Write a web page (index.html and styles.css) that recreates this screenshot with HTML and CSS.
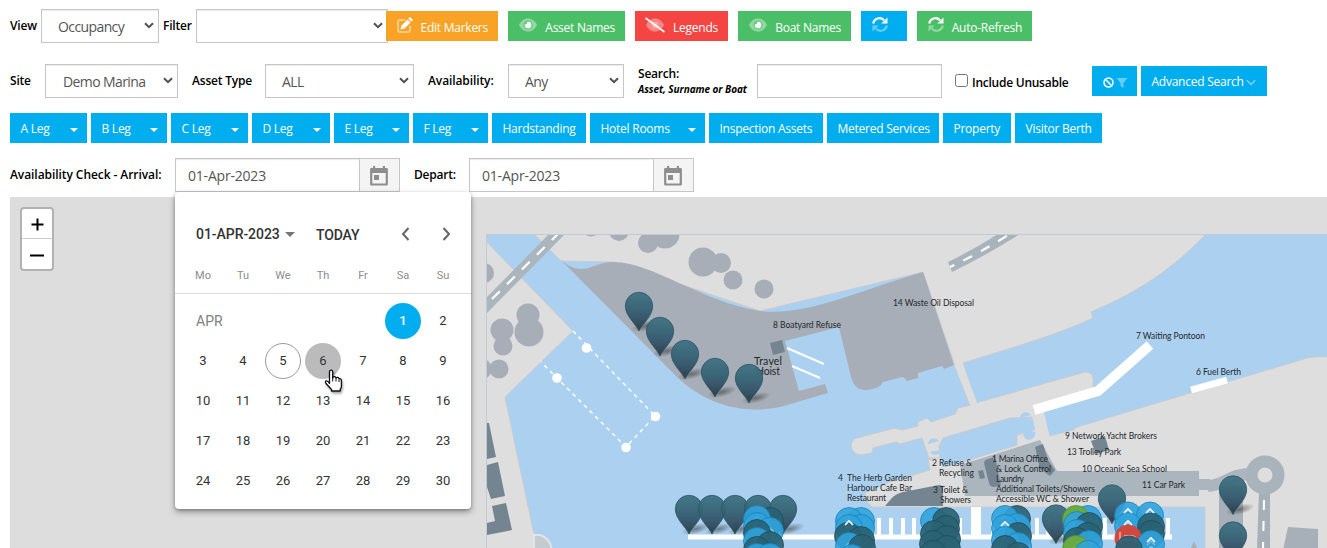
FILE: index.html
```html
<!DOCTYPE html>
<html lang="en">
<head>
<meta charset="utf-8">
<title>Marina Map</title>
<link rel="stylesheet" href="styles.css">
</head>
<body>
<svg class="defs" width="0" height="0">
  <defs>
    <symbol id="chev" viewBox="0 0 10 7"><path d="M1 1.200l4 4 4-4" fill="none" stroke="#505050" stroke-width="2"/></symbol>
    <symbol id="caret" viewBox="0 0 8 4"><path d="M0 0h8L4 4z" fill="#fff"/></symbol>
    <symbol id="eye" viewBox="0 0 18 14"><path d="M0 7C2 3 5 .5 9 .5S16 3 18 7c-2 4-5 6.500-9 6.500S2 11 0 7z" fill="#fff" opacity=".4"/><circle cx="9" cy="7" r="4.600" fill="#4bbf67" opacity=".6"/><path d="M9 3.700a3.300 3.300 0 1 1-3.200 2.600 1.900 1.900 0 0 0 2.400-2.400z" fill="#fff"/></symbol>
    <symbol id="refresh" viewBox="0 0 16 15"><path d="M1.200 6.500A6.300 6.300 0 0 1 12 3.200" fill="none" stroke="#fff" stroke-width="2.200"/><path d="M15.500.5v6H9.300z" fill="#fff"/><g opacity=".4"><path d="M14.800 8.500A6.300 6.300 0 0 1 4 11.800" fill="none" stroke="#fff" stroke-width="2.200"/><path d="M.5 14.500v-6h6.200z" fill="#fff"/></g></symbol>
    <symbol id="cal" viewBox="0 0 18 20"><path d="M1.200 3.200h15.600v15.300H1.200z" fill="none" stroke="#8e8e8e" stroke-width="2.200" stroke-linejoin="round"/><path d="M1 3h16v4H1zM3 0h2.200v4H3zM12.800 0H15v4h-2.200zM4 9h5v5H4z" fill="#8e8e8e"/></symbol>
    <linearGradient id="tealFill" x1="0" y1="0" x2="0" y2="1"><stop offset="0" stop-color="#3f7284"/><stop offset=".4" stop-color="#356374"/><stop offset=".65" stop-color="#34536a"/><stop offset="1" stop-color="#273b3d"/></linearGradient>
    <radialGradient id="shade"><stop offset="0" stop-color="#333" stop-opacity=".55"/><stop offset="1" stop-color="#333" stop-opacity="0"/></radialGradient>
    <g id="pin"><ellipse cx="7" cy="-5" rx="15" ry="5" transform="rotate(-14 7 -5)" fill="url(#shade)"/><path d="M0 0C-3-7-13.700-15-13.700-25a13.700 13.700 0 0 1 27.400 0C13.700-15 3-7 0 0z" fill="url(#tealFill)" fill-opacity=".95" stroke="#29576a" stroke-width=".8"/></g>
    <g id="dark"><circle r="13.500" fill="#2a6273" fill-opacity=".92" stroke="#194d60" stroke-width=".8"/></g>
    <g id="blue"><circle r="13.500" fill="#31a3dc" fill-opacity=".9" stroke="#1982b9" stroke-width=".8"/><path d="M-4 1l4-4 4 4M-2 3h4" fill="none" stroke="#d9f0fb" stroke-width="1.500" opacity=".45"/></g>
    <g id="green"><circle r="13.500" fill="#69aa43" stroke="#549037" stroke-width=".8"/><path d="M-7 2q7-6 14 0" fill="none" stroke="#92c474" stroke-width="1.500"/></g>
  </defs>
</svg>

<div class="row row-view">
  <label class="lbl w-view">View</label>
  <div class="select s-view"><span>Occupancy</span><svg><use href="#chev"/></svg></div>
  <label class="lbl w-filter">Filter</label>
  <div class="select s-filter"><span></span><svg><use href="#chev"/></svg></div>
  <div class="actions">
    <button class="act orange a1"><svg width="16" height="16" viewBox="0 0 16 16"><path d="M8 3H3Q1 3 1 5v8q0 2 2 2h8q2 0 2-2V9" fill="none" stroke="#fff" stroke-width="2" opacity=".45"/><path d="M4.500 8.500l6-6 3 3-6 6-4 1zM11.300 1.700L13 0l3 3-1.700 1.700z" fill="#fff"/></svg><span>Edit Markers</span></button>
    <button class="act green a2"><svg width="18" height="14"><use href="#eye"/></svg><span>Asset Names</span></button>
    <button class="act red a3"><svg width="20" height="16" viewBox="0 0 20 16"><path d="M1 8c2-4 5-6.500 9-6.500S17 4 19 8c-2 4-5 6.500-9 6.500S3 12 1 8z" fill="#fff" opacity=".35"/><circle cx="10" cy="8" r="3.500" fill="#fff" opacity=".25"/><path d="M.5 1l19 14" stroke="#fff" stroke-width="1.800"/></svg><span>Legends</span></button>
    <button class="act green a4"><svg width="18" height="14"><use href="#eye"/></svg><span>Boat Names</span></button>
    <button class="act cyan a5"><svg width="16" height="15"><use href="#refresh"/></svg></button>
    <button class="act green a6"><svg width="16" height="15"><use href="#refresh"/></svg><span>Auto-Refresh</span></button>
  </div>
</div>

<div class="row row-site">
  <label class="lbl w-site">Site</label>
  <div class="select s-site"><span>Demo Marina</span><svg><use href="#chev"/></svg></div>
  <label class="lbl w-type">Asset Type</label>
  <div class="select s-type"><span>ALL</span><svg><use href="#chev"/></svg></div>
  <label class="lbl w-avail">Availability:</label>
  <div class="select s-avail"><span>Any</span><svg><use href="#chev"/></svg></div>
  <label class="lbl w-search">Search:<em>Asset, Surname or Boat</em></label>
  <div class="field f-search"></div>
  <input type="checkbox" class="check">
  <label class="lbl w-unus">Include Unusable</label>
  <button class="tag icons"><svg width="11" height="11" viewBox="0 0 11 11"><circle cx="5.500" cy="5.500" r="4.500" fill="none" stroke="#fff" stroke-width="1.500"/><path d="M2.300 2.300l6.400 6.400" stroke="#fff" stroke-width="1.500"/></svg><svg width="12" height="10" viewBox="0 0 12 10"><path d="M.5 0h11L7.500 5v5L4.500 8V5z" fill="#fff" opacity=".4"/></svg></button>
  <button class="tag adv"><span>Advanced Search</span><svg width="10" height="7" viewBox="0 0 10 7"><path d="M.8 1.200L5 5.400l4.200-4.200" fill="none" stroke="#fff" stroke-width="1.400" opacity=".5"/></svg></button>
</div>

<div class="row row-legs">
  <button class="tag g1"><span>A Leg</span><svg><use href="#caret"/></svg></button>
  <button class="tag g2"><span>B Leg</span><svg><use href="#caret"/></svg></button>
  <button class="tag g3"><span>C Leg</span><svg><use href="#caret"/></svg></button>
  <button class="tag g4"><span>D Leg</span><svg><use href="#caret"/></svg></button>
  <button class="tag g5"><span>E Leg</span><svg><use href="#caret"/></svg></button>
  <button class="tag g6"><span>F Leg</span><svg><use href="#caret"/></svg></button>
  <button class="tag g7"><span>Hardstanding</span></button>
  <button class="tag g8"><span>Hotel Rooms</span><svg><use href="#caret"/></svg></button>
  <button class="tag g9"><span>Inspection Assets</span></button>
  <button class="tag g10"><span>Metered Services</span></button>
  <button class="tag g11"><span>Property</span></button>
  <button class="tag g12"><span>Visitor Berth</span></button>
</div>

<div class="row row-dates">
  <label class="lbl w-arr">Availability Check - Arrival:</label>
  <div class="date-wrap">
    <div class="field f-date">01-Apr-2023</div><div class="addon"><svg width="18" height="20"><use href="#cal"/></svg></div>
    <div class="picker">
      <div class="p-head"><b class="p-date">01-APR-2023</b><svg width="10" height="5" viewBox="0 0 10 5"><path d="M0 0h10L5 5z" fill="#757575"/></svg><b class="p-today">TODAY</b><svg class="p-prev" width="9" height="14" viewBox="0 0 9 14"><path d="M7.500 1L2 7l5.500 6" fill="none" stroke="#666" stroke-width="2"/></svg><svg class="p-next" width="9" height="14" viewBox="0 0 9 14"><path d="M1.500 1L7 7l-5.500 6" fill="none" stroke="#666" stroke-width="2"/></svg></div>
      <div class="p-week"><i>Mo</i><i>Tu</i><i>We</i><i>Th</i><i>Fr</i><i>Sa</i><i>Su</i></div>
      <div class="p-days">
        <span class="p-month">APR</span><span class="sel">1</span><span>2</span>
        <span>3</span><span>4</span><span class="now">5</span><span class="hov">6</span><span>7</span><span>8</span><span>9</span>
        <span>10</span><span>11</span><span>12</span><span>13</span><span>14</span><span>15</span><span>16</span>
        <span>17</span><span>18</span><span>19</span><span>20</span><span>21</span><span>22</span><span>23</span>
        <span>24</span><span>25</span><span>26</span><span>27</span><span>28</span><span>29</span><span>30</span>
      </div>
      <svg class="hand" width="20" height="25" viewBox="0 0 20 25"><path d="M5.500 14.500V3q0-1.800 1.600-1.800T8.700 3v6q.3-1.400 1.700-1.300T12 9.200q.4-1 1.600-.9t1.500 1.500q2.300-.6 2.300 2V17q0 2-1.200 3.500V22H7.500v-1.500L2 14.500q-1.200-2 .2-2.600t3.300 2.600z" fill="#fff" stroke="#101018" stroke-width="1.300" stroke-linejoin="round"/><path d="M8.700 8v4.500M12 9.500v3M15 10.500v2.500" stroke="#101018"/></svg>
    </div>
  </div>
  <label class="lbl w-dep">Depart:</label>
  <div class="field f-date">01-Apr-2023</div><div class="addon"><svg width="18" height="20"><use href="#cal"/></svg></div>
</div>

<main class="map">
<svg class="chart" viewBox="10 197 1317 351">
  <clipPath id="sheet"><path d="M486 234h841v314H486z"/></clipPath>
  <g clip-path="url(#sheet)">
    <path d="M486 234h841v314H486z" fill="#abd0f0"/>
    <g fill="#dedede" stroke="#c9cccf" stroke-width="1">
      <path d="M480 235L573 331 505 397 533 530Q536 536 535 550H480z"/>
      <path d="M533 233L561 261 614 262 760 311 923 272 955 366 970 406 976 403 963 363C1010 348 1055 336 1093 318L1091 312C1138 292 1173 269 1207 233z"/>
      <path d="M851 445Q852 439 857 438L895 428 902 430 918 426V422L927 418 931 422 955 414 958 408 970 405 976 403 1085 372Q1092 372 1093 378V388L1033 411V417L1010 418 943 438 939 446 940 458 929 458 922 438 900 444 896 442 873 448 872 453 860 455Q852 454 851 445z"/>
      <path d="M865 493L890 482 930 470 928 460 940 457 943 467 960 463 1017 445V435L1040 428 1045 437 1073 430 1077 427 1304 359Q1312 356 1330 357V550H1205V507H872Q866 502 865 493z"/>
    </g>
    <path d="M954 364L971 406 977 403 962 362zM1031 412l12-4 7 30-12 3z" fill="#dedede"/>
    <g fill="#abd0f0"><path d="M928 444a6 6 0 0 1 11-3zM930 452a6 6 0 0 0 11-2zM1020 418a6 6 0 0 1 11-3zM1022 424h8l-3 7zM1023 435a6 6 0 0 0 12-3l-7-2z"/></g>
    <path d="M561 260C568 266 574 269 581 269C592 269 598 262 614 262C652 262 702 302 760 311C805 317 860 290 923 272L954 365 944 369 942 366 918 373 918 378 907 381 903 377 883 382 880 386C868 392 855 393 851 377L839 327 785 341 799 391 825 384 828 393 780 407C740 415 705 403 678 378z" fill="#a7aeb7"/>
    <path d="M534 550V535h6q10 3 12 15z" fill="#c4cbd0" stroke="#e2e4e5" stroke-width="2"/>
    <path d="M487 297L549 234H565L487 313z" fill="#abb5bd"/>
    <path d="M492 299L559 233" stroke="#fff" stroke-width="2.200" stroke-dasharray="11 10"/>
    <path d="M948 262Q975 249 998 234H1020Q985 256 952 272z" fill="#a9b3bb"/>
    <path d="M950 267Q978 254 1010 234" fill="none" stroke="#fff" stroke-width="2.200" stroke-dasharray="10 10" stroke-dashoffset="5"/>
    <g fill="#a7aeb7">
      <circle cx="484" cy="273" r="10"/><circle cx="591" cy="227" r="9.500"/><circle cx="619" cy="231" r="10"/><circle cx="648" cy="243" r="10"/><circle cx="665" cy="234" r="14.500"/><circle cx="703" cy="262" r="14.500"/><circle cx="721" cy="263" r="10"/><circle cx="733" cy="280" r="9.500"/><circle cx="764" cy="289" r="9.500"/>
      <circle cx="528" cy="315" r="11.500"/><circle cx="529" cy="332" r="14.500"/><circle cx="502" cy="330" r="11.500"/><circle cx="503" cy="346" r="9.500"/><circle cx="499" cy="369" r="9.500"/><circle cx="482" cy="369" r="10"/>
    </g>
    <g fill="#748591">
      <path d="M487 423l2 0 7 34-9 2zM487 465l11-3 7 34-14 3-4-12zM492 506l14-3 6 27-25 5V523l8-2z"/>
      <path d="M770 343l12-3 3 12-12 3z"/>
    </g>
    <path d="M960 465L1040 440 1057 471H1199V479H1210V490H1199V496H965z" fill="#abb5bd"/>
    <path d="M1208 486C1226 485 1228 474 1252 474" fill="none" stroke="#abb5bd" stroke-width="12"/>
    <path d="M1219 486h24v64h-24zM1259 490h11v60h-13zM1288 527l30 2v21h-35zM1190 550l4-9 4 9z" fill="#a7b0b8"/>
    <circle cx="1265" cy="475" r="13.500" fill="none" stroke="#a9b3bb" stroke-width="12"/>
    <path d="M1264 500L1263 550" stroke="#fff" stroke-width="2" stroke-dasharray="10 11"/>
    <g fill="#748591"><path d="M885 506l6-7q4-5 12-7l36-7 4 1v20zM984 463q0-3 4-4l7-2 6 28-7 2q-4 0-5-4zM978 471l5-1 2 8-5 1zM1035 447l8-3 5 16 7 10-5 6-10-7zM1091 441l14-5 4 14-13 4z"/></g>
    <g stroke="#fff" fill="none">
      <path d="M787 348L824 364M792 366L820 378" stroke-width="2"/>
      <path d="M573 331L655 416 626 447 541 362" stroke-width="1.500" stroke-dasharray="4 4"/>
      <path d="M1034 410L1098 391 1150 345" stroke-width="10"/>
      <path d="M1191 390L1227 380" stroke-width="7"/>
      <path d="M688 537H1172" stroke-width="5"/>
      <path d="M879 518v18M891 518v18M903 518v18M914 518v18M960 518v18M993 518v18M1037 518v18M1048 518v18M1105 518v18M1168 518v18" stroke-width="4"/>
      <path d="M976 507v30" stroke-width="10"/>
    </g>
    <g fill="#fff"><circle cx="586.500" cy="348" r="4.800"/><circle cx="557" cy="378" r="4.800"/><circle cx="655.500" cy="416.500" r="4.800"/><circle cx="626" cy="447.500" r="4.800"/></g>
  </g>
  <path d="M486.500 548V234.500H1327" fill="none" stroke="#c0cbd5"/>

  <g class="names">
    <text x="893" y="306" textLength="81">14 Waste Oil Disposal</text>
    <text x="773" y="328" textLength="68">8 Boatyard Refuse</text>
    <text class="big" x="754" y="365" textLength="28">Travel</text>
    <text class="big" x="756" y="375" textLength="24">Hoist</text>
    <text x="1136" y="339" textLength="69">7 Waiting Pontoon</text>
    <text x="1196" y="375" textLength="45">6 Fuel Berth</text>
    <text x="1065" y="439" textLength="92">9 Network Yacht Brokers</text>
    <text x="1067" y="455" textLength="54">13 Trolley Park</text>
    <text x="1082" y="472" textLength="85">10 Oceanic Sea School</text>
    <text x="1142" y="488" textLength="43">11 Car Park</text>
    <text x="932" y="466" textLength="40">2 Refuse &amp;</text>
    <text x="939" y="476" textLength="35">Recycling</text>
    <text x="933" y="493" textLength="35">3 Toilet &amp;</text>
    <text x="940" y="503" textLength="31">Showers</text>
    <text x="838" y="481">4</text>
    <text x="847" y="481" textLength="65">The Herb Garden</text>
    <text x="847" y="491" textLength="65">Harbour Cafe Bar</text>
    <text x="847" y="501" textLength="39">Restaurant</text>
    <text x="992" y="462" textLength="56">1 Marina Office</text>
    <text x="996" y="472" textLength="55">&amp; Lock Control</text>
    <text x="996" y="482" textLength="28">Laundry</text>
    <text x="996" y="492" textLength="99">Additional Toilets/Showers</text>
    <text x="996" y="502" textLength="93">Accessible WC &amp; Shower</text>
  </g>

  <use href="#pin" x="639" y="331"/><use href="#pin" x="660" y="356"/><use href="#pin" x="685" y="379"/><use href="#pin" x="715" y="397"/><use href="#pin" x="749" y="403"/>
  <use href="#pin" x="689" y="534"/><use href="#pin" x="712" y="534"/><use href="#pin" x="735" y="534"/><use href="#pin" x="758" y="534"/><use href="#pin" x="783" y="534"/>
  <use href="#pin" x="1056" y="543.500"/><use href="#pin" x="1112" y="523.500"/><use href="#pin" x="1233" y="514.500"/><use href="#pin" x="1233" y="560.500"/>

  <use href="#dark" x="770" y="521"/><use href="#blue" x="757" y="519"/><use href="#blue" x="757" y="526"/><use href="#blue" x="770" y="531"/><use href="#dark" x="757" y="533"/><use href="#blue" x="757" y="541"/><use href="#dark" x="770" y="545"/><use href="#dark" x="757" y="550"/><use href="#blue" x="757" y="557"/><use href="#blue" x="770" y="557"/>
  <use href="#blue" x="861" y="521"/><use href="#blue" x="849" y="521"/><use href="#blue" x="861" y="528"/><use href="#blue" x="849" y="528"/><use href="#dark" x="848" y="536"/><use href="#dark" x="861" y="540"/><use href="#blue" x="849" y="546"/><use href="#dark" x="862" y="548"/><use href="#blue" x="852" y="558"/>
  <use href="#blue" x="934" y="521"/><use href="#dark" x="946" y="521"/><use href="#dark" x="946" y="529"/><use href="#dark" x="934" y="534"/><use href="#dark" x="947" y="539"/><use href="#dark" x="933" y="544"/><use href="#dark" x="947" y="549"/><use href="#dark" x="933" y="554"/>
  <use href="#dark" x="1017" y="519"/><use href="#blue" x="1005" y="519"/><use href="#blue" x="1017" y="527"/><use href="#blue" x="1005" y="528"/><use href="#dark" x="1018" y="536"/><use href="#blue" x="1005" y="540"/><use href="#blue" x="1018" y="546"/><use href="#dark" x="1005" y="549"/><use href="#dark" x="1018" y="556"/>
  <use href="#blue" x="1088" y="519"/><use href="#green" x="1076" y="519"/><use href="#blue" x="1077" y="525"/><use href="#dark" x="1089" y="526"/><use href="#blue" x="1077" y="533"/><use href="#dark" x="1088" y="536"/><use href="#dark" x="1077" y="541"/><use href="#blue" x="1089" y="544"/><use href="#green" x="1076" y="549"/><use href="#blue" x="1088" y="554"/>
  <use href="#blue" x="1128" y="515.500"/><use href="#blue" x="1150" y="515.500"/><use href="#blue" x="1128" y="526"/><use href="#dark" x="1151" y="526.500"/><use href="#dark" x="1151" y="534"/>
  <circle cx="1128" cy="538" r="13.500" fill="#cf4941"/><path d="M1120 532v12M1120 540h16v4M1124 536h8q4 0 4 4" fill="none" stroke="#e9afac" stroke-width="1.500"/>
  <use href="#blue" x="1151" y="544"/><use href="#dark" x="1129" y="549.500"/>
  <g fill="none" stroke="#fff" stroke-width="1.700"><path d="M1124 513l4-4 4 4M1146 513l4-4 4 4M1124 525l4-4 4 4M1147 542l4-4 4 4M1001 526l4-4 4 4M845 525l4-4 4 4"/></g>
</svg>
<div class="zoom">
  <button><svg width="13" height="13" viewBox="0 0 13 13"><path d="M6.500.5v12M.5 6.500h12" stroke="#000" stroke-width="2"/></svg></button>
  <button><svg width="14" height="13" viewBox="0 0 14 13"><path d="M0 6.500h14" stroke="#000" stroke-width="2"/></svg></button>
</div>
</main>
</body>
</html>
```

FILE: styles.css
```css
* { box-sizing: border-box; }
body { margin: 0; height: 548px; overflow: hidden; background: #fff; color: #000; font: 12px/16px "Open Sans", "Noto Sans", sans-serif; }
.defs { position: absolute; }
svg { display: block; flex: none; }
button { border: 0; padding: 0; margin: 0; color: #fff; font: inherit; display: flex; align-items: center; height: 30px; flex: none; white-space: nowrap; }
.row { display: flex; align-items: center; padding-left: 10px; height: 34px; }
.row > * { flex: none; }
.row-view { margin-top: 9px; }
.row-site { margin-top: 21px; }
.row-legs { margin-top: 15px; height: 30px; gap: 4px; }
.row-dates { margin-top: 15px; }

.lbl { font-weight: 600; font-size: 12px; letter-spacing: -.2px; white-space: nowrap; }
.lbl em { display: block; font-size: 10px; line-height: 14px; font-weight: 700; letter-spacing: -.07px; }
.w-view { width: 31px; }
.w-filter { width: 37px; padding-left: 4px; }
.w-site { width: 35px; }
.w-type { width: 87px; padding-left: 14px; }
.w-avail { width: 94px; padding-left: 14px; letter-spacing: -.1px; }
.w-search { width: 133px; padding-left: 14px; }
.w-unus { width: 124px; padding: 3px 0 0 4px; letter-spacing: -.25px; }
.w-arr { width: 165px; letter-spacing: -.07px; }
.w-dep { width: 69px; padding-left: 14px; }

.select, .field { height: 34px; border: 1px solid #c6c6c6; background: #fff; box-shadow: inset 0 1px 1px rgba(0,0,0,.08); color: #555; font-size: 14px; letter-spacing: -.2px; display: flex; align-items: center; white-space: nowrap; }
.select { justify-content: space-between; padding: 2px 4px 0 16px; letter-spacing: -.6px; }
.select svg { width: 10px; height: 7px; margin-top: -3px; }
.s-view { width: 118px; }
.s-filter { width: 192px; }
.s-site { width: 133px; padding-left: 17px; }
.s-type { width: 149px; }
.s-avail { width: 116px; }
.field { width: 185px; padding: 2px 0 0 12px; }
.check { width: 13px; height: 13px; margin: 0 0 1px 13px; }
.addon { width: 40px; height: 34px; border: 1px solid #c6c6c6; border-left: 0; background: #f4f4f4; display: flex; align-items: center; padding: 2px 0 0 10px; }

.actions { display: flex; gap: 10px; margin: 0 0 0 -2px; position: relative; }
.act { padding-left: 11px; }
.act svg { margin-top: -3px; }
.act span { margin-left: auto; padding: 3px 10px 0 0; }
.act span, .tag span { letter-spacing: -.25px; }
.orange { background: #f8a326; }
.green { background: #4bbf67; }
.red { background: #f54542; }
.cyan { background: #00adef; }
.a1 { width: 112px; }
.a2 { width: 117px; }
.a3 { width: 93px; padding-left: 10px; }
.a4 { width: 113px; }
.a5 { width: 46px; }
.a6 { width: 115px; }

.tag { background: #00adef; justify-content: space-between; padding: 0 9px 0 11px; }
.tag > span { padding-top: 2px; margin-left: -.5px; }
.tag > svg { margin-top: 3px; }
.row-legs .tag > svg { width: 8px; height: 4px; }
.tag.icons { width: 45px; justify-content: flex-start; gap: 2px; }
.tag.adv { width: 126px; margin-left: 4px; padding-right: 11px; }
.g1, .g3 { width: 77px; }
.g2 { width: 76px; }
.g4 { width: 78px; }
.g5, .g6 { width: 75px; }
.g7 { width: 94px; }
.g8 { width: 115px; }
.g9 { width: 114px; }
.g10 { width: 112px; }
.g11 { width: 68px; }
.g12 { width: 87px; }

.date-wrap { display: flex; position: relative; }
.picker { position: absolute; z-index: 5; left: 0; top: 34px; width: 296px; height: 317px; background: #fff; border-radius: 4px; box-shadow: 0 3px 6px rgba(0,0,0,.35), 0 1px 3px rgba(0,0,0,.2); font-family: Roboto, sans-serif; color: #333; }
.p-head { display: flex; align-items: center; height: 16px; padding: 34px 0 0 21px; box-sizing: content-box; }
.p-head b { font-weight: 500; font-size: 14px; letter-spacing: -.05px; }
.p-date { width: 89px; }
.p-head .p-today { margin: 2px 0 0 21px; width: 85px; letter-spacing: -.15px; }
.p-next { margin-left: 32px; }
.p-week { display: grid; grid-template-columns: repeat(7, 40px); padding: 26px 8px 9px; height: 52px; border-bottom: 1px solid #dcdcdc; }
.p-week i { font-style: normal; font-size: 11px; color: #8c8c8c; text-align: center; }
.p-days { display: grid; grid-template-columns: repeat(7, 40px); grid-auto-rows: 40px; padding: 7px 8px; }
.p-days span { width: 36px; height: 36px; margin: 2px; border-radius: 50%; display: flex; align-items: center; justify-content: center; font-size: 13px; padding-bottom: 1px; }
.p-days .p-month { grid-column: span 5; width: auto; justify-content: flex-start; padding-left: 11px; font-size: 14px; color: #808080; }
.p-days .sel { background: #00adef; color: #fff; font-weight: 500; }
.p-days .now { border: 1px solid #999; }
.p-days .hov { background: #bbb; }
.hand { position: absolute; left: 149px; top: 177px; filter: drop-shadow(1px 2px 1px rgba(0,0,0,.35)); }

.map { position: relative; margin: 5px 0 0 10px; width: 1317px; height: 351px; background: #ddd; }
.chart { width: 1317px; height: 351px; }
.names { font: 8.5px Lato, sans-serif; fill: #23282c; }
.names .big { font-size: 10.5px; }
.zoom { position: absolute; left: 10px; top: 10px; width: 34px; height: 64px; border: 2px solid #b2b2b2; border-radius: 4px; background: #fff; }
.zoom button { width: 30px; background: none; justify-content: center; padding-top: 2px; }
.zoom button:first-child { height: 30px; border-bottom: 1px solid #ccc; }
```
